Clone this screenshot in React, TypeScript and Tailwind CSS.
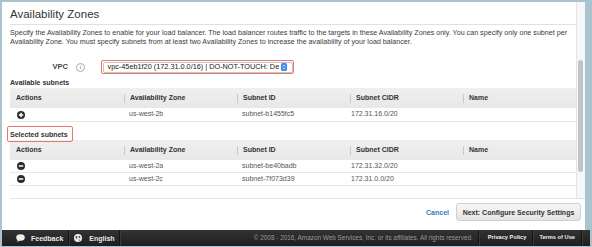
import React from "react";

type Subnet = {
  zone: string;
  id: string;
  cidr: string;
  name: string;
};

const available: Subnet[] = [
  { zone: "us-west-2b", id: "subnet-b1455fc5", cidr: "172.31.16.0/20", name: "" },
];

const selected: Subnet[] = [
  { zone: "us-west-2a", id: "subnet-be40badb", cidr: "172.31.32.0/20", name: "" },
  { zone: "us-west-2c", id: "subnet-7f073d39", cidr: "172.31.0.0/20", name: "" },
];

const cols = "grid grid-cols-[114px_113px_113px_113px_112px]";

function RoundIcon({ kind }: { kind: "add" | "remove" }) {
  return (
    <svg width="8" height="8" viewBox="0 0 16 16" className="block">
      <circle cx="8" cy="8" r="8" fill="#2b2b2b" />
      <rect x="3.5" y="6.5" width="9" height="3" fill="#fff" />
      {kind === "add" && <rect x="6.5" y="3.5" width="3" height="9" fill="#fff" />}
    </svg>
  );
}

function HeaderRow() {
  const labels = ["Availability Zone", "Subnet ID", "Subnet CIDR", "Name"];
  return (
    <div className={`${cols} h-[20px] bg-gradient-to-b from-[#efefef] to-[#e8e8e8] text-[7px] font-bold text-[#333]`}>
      <div className="flex items-center pl-[6px]">Actions</div>
      {labels.map((l) => (
        <div key={l} className="flex items-center">
          <span className="h-[9px] w-px bg-[#c9c9c9]" />
          <span className="pl-[5px]">{l}</span>
        </div>
      ))}
    </div>
  );
}

function SubnetRow({ s, kind, h }: { s: Subnet; kind: "add" | "remove"; h: string }) {
  return (
    <div className={`${cols} ${h} items-center border-b border-[#e6e6e6] text-[7px] text-[#555]`}>
      <div className="pl-[7px]">
        <RoundIcon kind={kind} />
      </div>
      <div className="pl-[5px]">{s.zone}</div>
      <div className="pl-[5px]">{s.id}</div>
      <div className="pl-[1px]">{s.cidr}</div>
      <div className="pl-[6px]">{s.name}</div>
    </div>
  );
}

function Sep() {
  return (
    <div className="flex h-full">
      <span className="w-px bg-[#141414]" />
      <span className="w-px bg-[#3a3a3a]" />
    </div>
  );
}

export default function App() {
  return (
    <div className="w-[592px] h-[247px] bg-white border-l-2 border-t-2 border-r-2 border-b border-[#a9c3cf] flex flex-col font-['Liberation_Sans',Arial,sans-serif] text-[#333] overflow-hidden">
      <div className="flex h-[228px]">
        <div className="flex-1 flex flex-col">
          {/* scroll panel */}
          <div className="ml-[8px] h-[197px] flex border-b border-[#e3e3e3]">
            <div className="w-[566px] flex flex-col">
              <div className="mt-[5px] text-[11.5px] leading-[15px] pb-[2px] border-b border-[#e1e1e1] text-[#333]">
                Availability Zones
              </div>
              <div className="mt-[3.5px] text-[7.15px] leading-[9px] text-[#3a3a3a] whitespace-nowrap">
                Specify the Availability Zones to enable for your load balancer. The load balancer routes traffic to the targets in these Availability Zones only. You can specify only one subnet per
                <br />
                Availability Zone. You must specify subnets from at least two Availability Zones to increase the availability of your load balancer.
              </div>

              <div className="mt-[13.5px] h-[14px] flex items-center">
                <div className="w-[58px] text-right text-[7.5px] font-bold text-[#444]">VPC</div>
                <div className="ml-[8px] w-[9px] h-[9px] rounded-full border border-[#aaa] flex items-center justify-center text-[6px] leading-none text-[#888] font-['DejaVu_Serif',serif]">
                  i
                </div>
                <div className="ml-[16px] w-[193px] h-[14px] border-[1.5px] border-[#e8776b] rounded-[2px] p-[0.5px]">
                  <div className="h-full flex items-center rounded-[2px] border border-[#c4c4c4] bg-white pl-[4px] pr-[5px]">
                    <span className="flex-1 whitespace-nowrap text-[7.3px] leading-none text-[#222]">
                      vpc-45eb1f20 (172.31.0.0/16) | DO-NOT-TOUCH: De
                    </span>
                    <span className="ml-[2px] w-[6px] h-[8px] rounded-[1.5px] bg-[#3d8ef0] flex items-center justify-center">
                      <svg width="4" height="6" viewBox="0 0 4 6">
                        <path d="M0.7 2.3 L2 1 L3.3 2.3 M0.7 3.7 L2 5 L3.3 3.7" stroke="#fff" strokeWidth="0.7" fill="none" />
                      </svg>
                    </span>
                  </div>
                </div>
              </div>

              <div className="mt-[4px] text-[7px] leading-[10px] font-bold text-[#333]">Available subnets</div>
              <HeaderRow />
              {available.map((s) => (
                <SubnetRow key={s.id} s={s} kind="add" h="h-[14px]" />
              ))}

              <div className="relative mt-[8px] text-[7px] leading-[10px] font-bold text-[#333]">
                Selected subnets
                <div className="absolute -left-[3px] -top-[4px] w-[66px] h-[16px] border-[1.5px] border-[#e8776b] rounded-[2px]" />
              </div>
              <HeaderRow />
              {selected.map((s) => (
                <SubnetRow key={s.id} s={s} kind="remove" h="h-[13px]" />
              ))}
            </div>
            {/* scrollbar */}
            <div className="w-[9px] bg-[#f7f7f7] border-l border-[#e4e4e4]">
              <div className="mt-[58px] ml-[1px] w-[5px] h-[112px] rounded-full bg-[#c3c3c3]" />
            </div>
          </div>

          {/* buttons */}
          <div className="flex-1 flex items-start justify-end pr-[4px] pt-[4px]">
            <span className="mt-[6px] text-[7px] font-bold text-[#2d7dc4] leading-none">Cancel</span>
            <button className="ml-[7px] w-[125px] h-[18px] rounded-[3px] border border-[#cfcfcf] bg-gradient-to-b from-[#f7f7f7] to-[#e4e4e4] text-[7px] font-bold text-[#333] leading-none">
              Next: Configure Security Settings
            </button>
          </div>
        </div>
        <div className="w-[5px] bg-[#a9c3cf]" />
      </div>

      {/* footer */}
      <div className="h-[16px] flex items-center bg-gradient-to-b from-[#333] to-[#1e1e1e] text-[7px] leading-none">
        <div className="h-full flex items-center pl-[14px] pr-[5px]">
          <svg width="9" height="8" viewBox="0 0 18 16">
            <ellipse cx="9" cy="7" rx="8.5" ry="6.5" fill="#eee" />
            <path d="M4 11 L2 16 L9 12 Z" fill="#eee" />
          </svg>
          <span className="ml-[6px] font-bold text-[#e8e8e8]">Feedback</span>
        </div>
        <Sep />
        <div className="h-full flex items-center pl-[4px] pr-[4px]">
          <svg width="8" height="8" viewBox="0 0 16 16">
            <circle cx="8" cy="8" r="8" fill="#eee" />
            <path d="M3 4 Q6 3 7 6 Q5 8 6 11 Q3 9 3 4 Z M9 3 Q13 4 13 8 Q11 7 10 9 Q9 6 9 3 Z M9 11 Q12 10 12 13 Q10 14 9 11 Z" fill="#444" />
          </svg>
          <span className="ml-[7px] font-bold text-[#e8e8e8]">English</span>
        </div>
        <Sep />
        <div className="flex-1" />
        <span className="text-[6.4px] text-[#9a9a9a] pr-[5px]">
          © 2008 - 2016, Amazon Web Services, Inc. or its affiliates. All rights reserved.
        </span>
        <Sep />
        <span className="pl-[8px] pr-[6px] text-[5.7px] font-bold text-[#f0f0f0]">Privacy Policy</span>
        <Sep />
        <span className="pl-[5px] pr-[6px] text-[5.7px] font-bold text-[#f0f0f0]">Terms of Use</span>
        <Sep />
        <div className="w-[7px]" />
      </div>
    </div>
  );
}
